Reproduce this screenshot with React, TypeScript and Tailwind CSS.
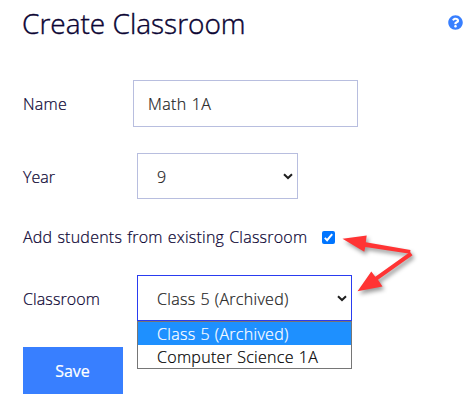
import type { ReactNode } from "react";

const Chevron = () => (
  <svg width="10" height="7" viewBox="0 0 10 7" fill="none">
    <path d="M1 1.2 5 5 9 1.2" stroke="#1f1f1f" strokeWidth="2" />
  </svg>
);

const HelpIcon = () => (
  <svg
    width="15"
    height="15"
    viewBox="0 0 512 512"
    fill="#387fff"
    className="mt-[15px]"
  >
    <path d="M504 256c0 137-111 248-248 248S8 393 8 256C8 119.100 119 8 256 8s248 111.100 248 248zM262.700 90c-54.500 0-89.300 23-116.500 63.800-3.500 5.300-2.400 12.400 2.700 16.300l34.700 26.300c5.200 3.900 12.600 3 16.700-2.100 17.900-22.700 30.100-35.800 57.300-35.800 20.400 0 45.700 13.100 45.700 33 0 15-12.400 22.700-32.500 34C247.100 238.500 216 254.900 216 296v4c0 6.600 5.400 12 12 12h56c6.600 0 12-5.400 12-12v-1.300c0-28.500 83.200-29.600 83.200-106.700 0-58-60.200-102-116.500-102zM256 338c-25.400 0-46 20.600-46 46s20.600 46 46 46 46-20.600 46-46-20.600-46-46-46z" />
  </svg>
);

// Red callout pointing at the checkbox and the classroom select
const Arrows = () => (
  <svg
    width="90"
    height="75"
    viewBox="340 225 90 75"
    className="absolute left-[340px] top-[225px] drop-shadow-[2px_3px_2px_rgba(0,0,0,0.4)]"
  >
    <g fill="#ff3434">
      <path d="M342.500 238.800 366.700 235.500 365.800 242.300 410.500 250 410 253.800 365.300 246.900 364.300 251.800Z" />
      <path d="M357.500 291.300 371.300 271.500 375.300 276.800 410 252 412.500 255.300 378 279.800 382.500 286.500Z" />
    </g>
  </svg>
);

const Label = ({ children }: { children: ReactNode }) => (
  <span className="w-[110px] shrink-0">{children}</span>
);

const App = () => {
  return (
    <div className="relative h-[411px] w-[476px] overflow-hidden bg-white pl-[23px] font-['Open_Sans','Noto_Sans',sans-serif] text-[16px] font-light leading-[22px] text-[#0b0433] [-webkit-text-stroke:0.2px]">
      <header className="flex h-20 justify-between pr-[13px]">
        <h1 className="-ml-px pt-[4px] text-[28px] leading-[38px] [-webkit-text-stroke:0.4px]">
          Create Classroom
        </h1>
        <HelpIcon />
      </header>

      <div className="flex h-[47px] items-center">
        <Label>
          <span className="tracking-[0.3px]">Name</span>
        </Label>
        <div className="flex h-[47px] w-[225px] items-center border border-[#b8bedf] pl-[14px] tracking-[0.4px] [word-spacing:0.5px] text-[#222]">
          Math 1A
        </div>
      </div>

      <div className="mt-[26px] flex h-[46px] items-center">
        <Label>
          <span className="block pt-0.5">Year</span>
        </Label>
        <div className="ml-1 flex h-[46px] w-[161px] items-center justify-between border border-[#b8bedf] pl-[19px] pr-1 text-[#222]">
          <span className="pt-0.5">9</span>
          <Chevron />
        </div>
      </div>

      <div className="mt-[27px] flex h-[22px] items-center">
        <span className="w-[285px] whitespace-nowrap tracking-[0.23px] [word-spacing:0.7px]">
          Add students from existing Classroom
        </span>
        <span className="ml-[14px] flex size-[13px] items-center justify-center rounded-[2px] bg-[#0075ff]">
          <svg width="13" height="13" viewBox="0 0 13 13" fill="none">
            <path d="M2.800 6.900 5.100 9.200 10.200 3.200" stroke="#fff" strokeWidth="2" />
          </svg>
        </span>
      </div>

      <div className="mt-[27px] flex h-[46px] items-center">
        <Label>
          <span className="block pt-0.5 tracking-[0.1px]">Classroom</span>
        </Label>
        <div className="relative ml-1 w-[215px] tracking-[0.3px] [word-spacing:0.5px] text-[#222]">
          <div className="flex h-[46px] items-center justify-between border border-[#2a3cf0] pl-[19px] pr-1">
            <span className="pt-0.5">Class 5 (Archived)</span>
            <Chevron />
          </div>
          <ul className="absolute left-0 top-[46px] w-[215px] border border-[#767676] bg-white text-black">
            <li className="h-[23px] bg-[#1e90ff] pl-[19px] leading-6 text-white">
              Class 5 (Archived)
            </li>
            <li className="h-[23px] pl-[19px] leading-6">
              Computer Science 1A
            </li>
          </ul>
        </div>
      </div>

      <button className="mt-[26px] block h-[47px] w-[100px] bg-[#387fff] pr-px font-normal text-white">
        Save
      </button>

      <Arrows />
    </div>
  );
};

export default App;
